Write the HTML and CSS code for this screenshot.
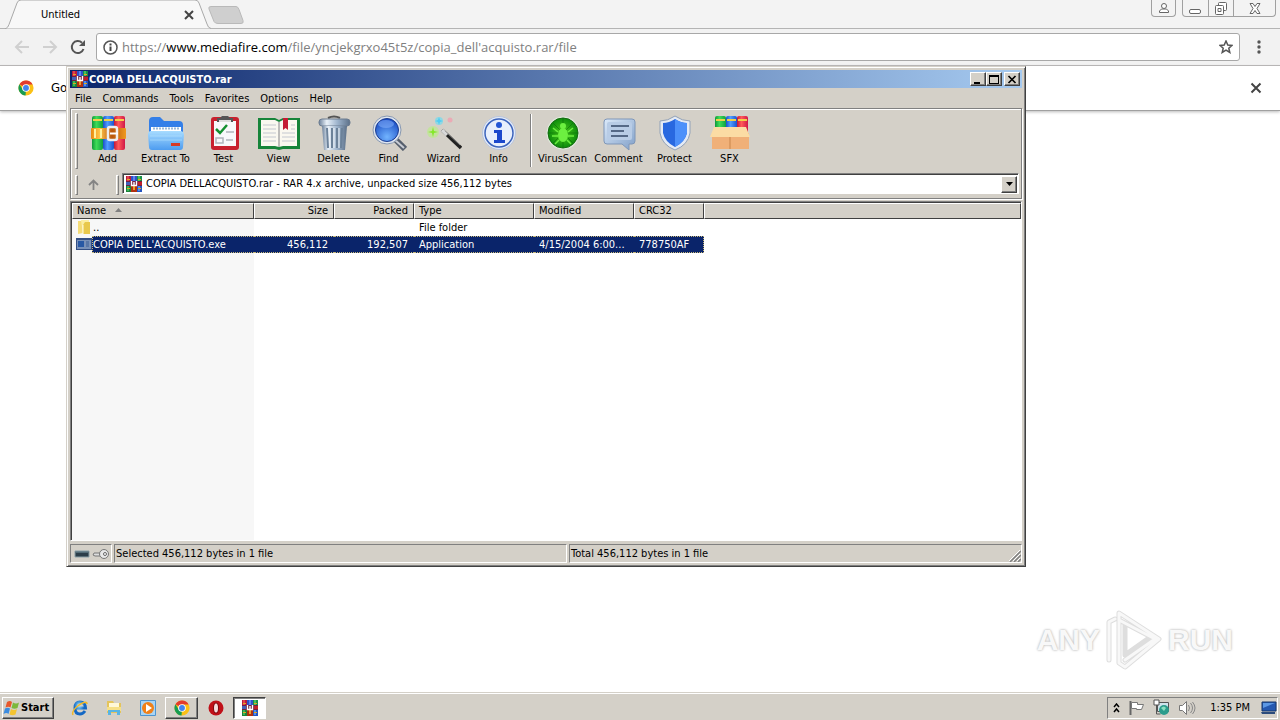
FILE: index.html
```
<!DOCTYPE html>
<html lang="en">
<head>
<meta charset="utf-8">
<title>COPIA DELLACQUISTO.rar</title>
<link rel="stylesheet" href="styles.css">
</head>
<body>
<svg class="defs" aria-hidden="true">
  <defs>
    <linearGradient id="gRed" x1="0" x2="1"><stop offset="0" stop-color="#c41838"/><stop offset=".4" stop-color="#ff5a5a"/><stop offset="1" stop-color="#d01848"/></linearGradient>
    <linearGradient id="gBlue" x1="0" x2="1"><stop offset="0" stop-color="#1c50c8"/><stop offset=".4" stop-color="#4f9dff"/><stop offset="1" stop-color="#1c54cc"/></linearGradient>
    <linearGradient id="gGreen" x1="0" x2="1"><stop offset="0" stop-color="#10983a"/><stop offset=".4" stop-color="#3fdc58"/><stop offset="1" stop-color="#10a040"/></linearGradient>
    <linearGradient id="gGold" x1="0" x2="1"><stop offset="0" stop-color="#e88a10"/><stop offset=".25" stop-color="#ffc64a"/><stop offset=".6" stop-color="#b8560c"/><stop offset="1" stop-color="#f09a20"/></linearGradient>
    <linearGradient id="gFolder" x1="0" x2="0" y1="0" y2="1"><stop offset="0" stop-color="#a8dcff"/><stop offset="1" stop-color="#4d9cf0"/></linearGradient>
    <linearGradient id="gSteel" x1="0" x2="1"><stop offset="0" stop-color="#6d829c"/><stop offset=".25" stop-color="#e8f0f8"/><stop offset=".6" stop-color="#9db3cc"/><stop offset="1" stop-color="#5c7088"/></linearGradient>
    <linearGradient id="gNote" x1="0" x2="1" y1="0" y2="1"><stop offset="0" stop-color="#dceafa"/><stop offset="1" stop-color="#7f9fc8"/></linearGradient>
    <radialGradient id="gLens" cx=".5" cy=".8" r=".8"><stop offset="0" stop-color="#72b4ff"/><stop offset="1" stop-color="#1446c0"/></radialGradient>
    <radialGradient id="gVirus"><stop offset="0" stop-color="#52d01c"/><stop offset="1" stop-color="#0c8c0c"/></radialGradient>
    <radialGradient id="gIe" cx=".4" cy=".3"><stop offset="0" stop-color="#8ee0ff"/><stop offset="1" stop-color="#1468c4"/></radialGradient>
  </defs>
  <symbol id="rar" viewBox="0 0 16 16">
    <path fill="#b81c38" d="M0 0h5v5H0z"/><path fill="#3050c8" d="M5 0h6v5H5z"/><path fill="#189048" d="M11 0h5v5h-5z"/>
    <path fill="#e04050" d="M1 0h2v5H1z"/><path fill="#5a84f0" d="M7 0h2v5H7z"/><path fill="#40c060" d="M12 0h2v5h-2z"/>
    <path fill="#1c8038" d="M0 10h5v6H0z"/><path fill="#b03010" d="M5 10h6v6H5z"/><path fill="#2454c0" d="M11 10h5v6h-5z"/>
    <path fill="#38b858" d="M1 10h2v5H1z"/><path fill="#4c8cf0" d="M12 10h2v5h-2z"/><path fill="#e8a030" d="M7 10h2v4H7z"/>
    <path fill="#702040" d="M0 5h16v5H0z"/><path fill="#4060b8" d="M0 6h4v3H0z"/><path fill="#c02028" d="M12 6h4v3h-4z"/>
    <path fill="none" stroke="#fff" stroke-width="1.400" d="M5.500 5v4.500h5V5M8 6v3"/>
    <path fill="#e0a820" d="M1 3h3v1H1zM12 3h3v1h-3zM1 12h3v1H1zM12 12h3v1h-3z"/>
  </symbol>
  <symbol id="chrome" viewBox="0 0 18 18">
    <circle cx="9" cy="9" r="8.500" fill="#fbc116"/>
    <path fill="#e33b2e" d="M9 9 1.600 4.800A8.500 8.500 0 0 1 16.500 5H9z"/>
    <path fill="#179c52" d="M9 9 8.500 17.500A8.500 8.500 0 0 1 1.600 4.800L5.500 11z"/>
    <circle cx="9" cy="9" r="4.300" fill="#fff"/><circle cx="9" cy="9" r="3.300" fill="#4384ee"/>
  </symbol>
</svg>

<div class="desktop">
  <section class="browser" aria-label="Browser">
    <header class="tabstrip">
      <div class="tab">
        <svg class="tab-shape" viewBox="0 0 206 29" preserveAspectRatio="none" aria-hidden="true"><path d="M0 28.500h1q2-1 3-4L12 3q1-3 4-3h174q3 0 4 3l8 21q1 4 4 4.500V29H0z" fill="#f8f8f8" stroke="#a9a9a9"/></svg>
        <span class="tab-title">Untitled</span>
        <button class="flat tab-close" aria-label="Close tab"><svg width="10" height="10" viewBox="0 0 10 10"><path d="m1 1 8 8M9 1 1 9" stroke="#444" stroke-width="2"/></svg></button>
      </div>
      <button class="flat new-tab" aria-label="New tab"><svg width="36" height="18" viewBox="0 0 36 18"><path d="M3 .5h25q2 0 3 3l4 11q1 3-2 3H10q-3 0-4-2L1 3Q0 .5 3 .5z" fill="#cfcfcf" stroke="#b9b9b9"/></svg></button>
      <div class="win-controls">
        <button class="wc user" aria-label="Profile"><svg width="12" height="12" viewBox="0 0 12 12" fill="#fff" stroke="#666"><path d="M1.500 10.500V9l2-2h5l2 2v1.500z"/><circle cx="6" cy="4" r="2.500"/></svg></button>
        <div class="wc-group">
          <button class="wc" aria-label="Minimize"><svg width="13" height="12" viewBox="0 0 13 12"><rect x=".5" y="7.500" width="11" height="4" rx="1.500" fill="#fff" stroke="#666"/></svg></button>
          <button class="wc" aria-label="Restore"><svg width="14" height="13" viewBox="0 0 14 13" fill="#fff" stroke="#666"><rect x="4.500" y=".5" width="8" height="8" rx="1"/><rect x="1.500" y="3.500" width="8" height="9" rx="1"/><path d="M4 6.500h3v3H4z"/></svg></button>
          <button class="wc wide" aria-label="Close"><svg width="12" height="11" viewBox="0 0 12 11"><path d="M1 .5h3l2 3 2-3h3L8 5.500l3 5H8l-2-3-2 3H1l3-5z" fill="#fff" stroke="#666"/></svg></button>
        </div>
      </div>
    </header>
    <nav class="navbar">
      <button class="flat nav" aria-label="Back"><svg width="16" height="14" viewBox="0 0 16 14"><path d="M15 7H2M8 1 2 7l6 6" fill="none" stroke="#d0d0d0" stroke-width="2"/></svg></button>
      <button class="flat nav" aria-label="Forward"><svg width="16" height="14" viewBox="0 0 16 14"><path d="M1 7h13M8 1l6 6-6 6" fill="none" stroke="#d0d0d0" stroke-width="2"/></svg></button>
      <button class="flat nav" aria-label="Reload"><svg width="16" height="16" viewBox="0 0 16 16"><path d="M13.500 10A6 6 0 1 1 12 3.700" fill="none" stroke="#555" stroke-width="2"/><path d="M15 1v6H9z" fill="#555"/></svg></button>
      <div class="omnibox">
        <svg width="15" height="15" viewBox="0 0 15 15" aria-hidden="true"><circle cx="7.500" cy="7.500" r="6.500" fill="none" stroke="#555" stroke-width="1.500"/><path d="M6.500 6.500h2V11h-2zM6.500 3.500h2v2h-2z" fill="#444"/></svg>
        <a class="url" href="#">https://<b>www.mediafire.com</b>/file/yncjekgrxo45t5z/copia_dell'acquisto.rar/file</a>
        <button class="flat star" aria-label="Bookmark"><svg width="14" height="14" viewBox="0 0 14 14"><path d="m7 1 1.800 4 4.200.4-3.200 2.800 1 4.300L7 10.200l-3.800 2.300 1-4.300L1 5.400 5.200 5z" fill="none" stroke="#555" stroke-width="1.500"/></svg></button>
      </div>
      <button class="flat dots" aria-label="Menu"><svg width="4" height="14" viewBox="0 0 4 14" fill="#555"><circle cx="2" cy="2" r="1.700"/><circle cx="2" cy="7" r="1.700"/><circle cx="2" cy="12" r="1.700"/></svg></button>
    </nav>
    <div class="infobar">
      <svg class="i16" aria-hidden="true"><use href="#chrome"/></svg>
      <span class="info-text">Go</span>
      <button class="flat info-close" aria-label="Dismiss"><svg width="12" height="12" viewBox="0 0 12 12"><path d="m1.500 1.500 9 9M10.500 1.500l-9 9" stroke="#444" stroke-width="2"/></svg></button>
    </div>
    <main class="page">
      <div class="watermark">
        <span>ANY</span>
        <svg width="58" height="64" viewBox="0 0 58 64" aria-hidden="true"><g fill="none" stroke-linejoin="round" stroke-linecap="round"><path id="mark" d="M4 52V14l6-3M14 50V5l40 26-34 28-6-4v-5M14 12l38 20M20 52l30-21M20 15v32l24-17" stroke="#dedede" stroke-width="5"/><path d="M4 52V14l6-3M14 50V5l40 26-34 28-6-4v-5M14 12l38 20M20 52l30-21" stroke="#f8f8f8" stroke-width="3"/></g></svg>
        <span>RUN</span>
      </div>
    </main>
  </section>

  <section class="window" aria-label="WinRAR">
    <header class="titlebar">
      <svg class="i16" aria-hidden="true"><use href="#rar"/></svg>
      <h1>COPIA DELLACQUISTO.rar</h1>
      <button class="cap" aria-label="Minimize"><svg width="10" height="9" viewBox="0 0 10 9"><path d="M1 7h6v2H1z"/></svg></button>
      <button class="cap" aria-label="Maximize"><svg width="10" height="9" viewBox="0 0 10 9"><path d="M0 0h10v9H0zm1 2v6h8V2z" fill-rule="evenodd"/></svg></button>
      <button class="cap close" aria-label="Close"><svg width="10" height="9" viewBox="0 0 10 9"><path d="m1.500 1 7 7M8.500 1l-7 7" stroke="#000" stroke-width="1.700"/></svg></button>
    </header>
    <nav class="menu">
      <button>File</button><button>Commands</button><button>Tools</button><button>Favorites</button><button>Options</button><button>Help</button>
    </nav>
    <div class="rebar">
      <div class="tools">
        <i class="grip"></i>
        <button class="tool"><svg viewBox="0 0 36 36"><rect x="2" y="1" width="11" height="34" rx="2" fill="url(#gGreen)"/><rect x="13" y="1" width="11" height="34" rx="2" fill="url(#gBlue)"/><rect x="24" y="1" width="11" height="34" rx="2" fill="url(#gRed)"/><path d="M3 5h9M14 5h9M25 5h9" stroke="#f2d04c" stroke-width="2"/><rect x="1" y="13" width="35" height="11" rx="1" fill="url(#gGold)"/><path d="M5 14v9M11 14v9" stroke="#fff0a0" stroke-width="2"/><rect x="18" y="12" width="9" height="13" rx="2" fill="none" stroke="#eee" stroke-width="2.500"/><path d="M20 18.500h8" stroke="#fff" stroke-width="2"/></svg>Add</button>
        <button class="tool extract"><svg viewBox="0 0 36 36"><path d="M1 6q0-4 4-4h7l4 4h15q4 0 4 4v15H1z" fill="#347fe8"/><path d="M3 12h30v12H3z" fill="#fff"/><path d="M5 13.500h27" stroke="#9ab8d8" stroke-width="2" stroke-dasharray="2 1"/><path d="M0 20q0-4 3-4h29q4 0 4 4l-1 12q0 3-3 3H4q-3 0-3-3z" fill="url(#gFolder)"/><path d="M2 21h32M2 25h32" stroke="#b8e4ff" opacity=".6"/><rect x="23" y="28" width="9" height="3" fill="#d83a26"/></svg>Extract To</button>
        <button class="tool"><svg viewBox="0 0 36 36"><rect x="5" y="2" width="28" height="33" rx="3" fill="#c8202e"/><rect x="8" y="6" width="22" height="25" fill="#f8f8fa"/><path d="M11 7V3h3l2-2h6l2 2h3v4z" fill="#555"/><path d="M13 6h12" stroke="#ddd" stroke-width="2"/><path d="m10 14 4 4 7-8" fill="none" stroke="#149030" stroke-width="2.500"/><path d="M20 17h8M20 25h7M10 23h7v5h-7z" fill="none" stroke="#b0b4bc" stroke-width="1.500"/></svg>Test</button>
        <button class="tool"><svg class="book" viewBox="0 0 44 36"><path d="M1 3h17l4 2 4-2h17v31H26l-4 1-4-1H1z" fill="#16843a"/><path d="M4 5h14l4 2v25l-4-1H4zM40 5H26l-4 2v25l4-1h14z" fill="#faf8f0"/><path d="M22 7v25" stroke="#aaa" stroke-width="1.500"/><path d="M6 10h13M6 14h13M6 18h13M6 22h13M6 26h13M25 18h13M25 22h13M25 26h13M34 10h4M34 14h4" stroke="#c4c8d0"/><path d="M26 3h5v12l-2.500-2-2.500 2z" fill="#c41c34"/></svg>View</button>
        <button class="tool"><svg viewBox="0 0 36 36"><path d="M12 3q6-3 12 0" fill="none" stroke="#555" stroke-width="2"/><rect x="3" y="4" width="31" height="7" rx="3" fill="url(#gSteel)" stroke="#6c7c90"/><path d="M6 11h25l-2 24H8z" fill="url(#gSteel)"/><path d="m11 13 1 20M16 13v20M21 13v20M26 13l-1 20" stroke="#6c829a" stroke-width="2"/><path d="m13 13 1 20M18 13v20M23 13v20" stroke="#eef4fa"/></svg>Delete</button>
        <button class="tool"><svg viewBox="0 0 36 36"><path d="m25 25 9 9" stroke="#555e6c" stroke-width="6"/><path d="m24 25 9 8" stroke="#c8ccd4" stroke-width="2"/><circle cx="16" cy="15" r="14" fill="#dfe6f0" stroke="#8898b0"/><circle cx="16" cy="15" r="11.500" fill="url(#gLens)" stroke="#1c3c90"/><ellipse cx="15" cy="9" rx="8" ry="4" fill="#8cb8ff" opacity=".5"/></svg>Find</button>
        <button class="tool"><svg viewBox="0 0 36 36"><path d="m16 15 19 18" stroke="#222" stroke-width="3.500"/><path d="m16 15 5 5" stroke="#d8d8d8" stroke-width="3.500"/><path d="m19 16 15 14" stroke="#999" stroke-width=".8"/><circle cx="7" cy="17" r="6" fill="#b8f080" opacity=".6"/><path d="m7 12 1 4 4 1-4 1-1 4-1-4-4-1 4-1z" fill="#84e828"/><circle cx="13" cy="6" r="4" fill="#70dcf0" opacity=".7"/><path d="m13 2 1 3 3 1-3 1-1 3-1-3-3-1 3-1z" fill="#50ccf4"/><circle cx="24" cy="5" r="2.500" fill="#f0a0b0" opacity=".8"/></svg>Wizard</button>
        <button class="tool"><svg viewBox="0 0 36 36"><circle cx="18" cy="18" r="16.500" fill="#e4ebf8" stroke="#b8c4dc"/><circle cx="18" cy="18" r="14" fill="#e8effc" stroke="#3c64bc" stroke-width="1.500"/><circle cx="18" cy="10" r="3" fill="#2456d4"/><path d="M13 15h8v10h3v3H13v-3h3v-7h-3z" fill="#1c48cc"/></svg>Info</button>
        <i class="sep"></i>
        <button class="tool"><svg viewBox="0 0 36 36"><circle cx="18" cy="18" r="16.500" fill="#e0e8dc"/><circle cx="18" cy="18" r="15" fill="url(#gVirus)" stroke="#176b12"/><path d="M18 3v30M3 18h30M8 8l20 20M28 8 8 28" stroke="#0b6f0b" opacity=".6"/><ellipse cx="18" cy="20" rx="5" ry="7" fill="#6cf040"/><circle cx="18" cy="11" r="3" fill="#6cf040"/><path d="m13 17-5-4M23 17l5-4M13 21H7M23 21h6M14 25l-4 4M22 25l4 4" stroke="#6cf040" stroke-width="1.500"/></svg>VirusScan</button>
        <button class="tool comment"><svg viewBox="0 0 36 36"><path d="M6 4h25q3 0 3 3v19q0 3-3 3h-3v6l-7-6H6q-3 0-3-3V7q0-3 3-3z" fill="url(#gNote)" stroke="#7e96b8"/><rect x="6" y="7" width="25" height="18" rx="2" fill="#b8cce6"/><path d="M10 11h18M10 16h13M10 21h17" stroke="#344868" stroke-width="1.500"/></svg>Comment</button>
        <button class="tool"><svg viewBox="0 0 36 36"><path d="M18 1q7 5 15 5v12q-2 12-15 17Q5 30 3 18V6q8 0 15-5z" fill="#e4eaf4" stroke="#92a2b8"/><path d="M18 4q6 4 12 4v10q-2 9-12 14Q8 27 6 18V8q6 0 12-4z" fill="#2868e0"/><path d="M18 4q6 4 12 4v10q-2 9-12 14z" fill="#4c90fa"/></svg>Protect</button>
        <button class="tool"><svg class="sfx" viewBox="0 0 40 36"><rect x="5" y="1" width="11" height="18" rx="2" fill="url(#gGreen)"/><rect x="16" y="1" width="11" height="18" rx="2" fill="url(#gBlue)"/><rect x="27" y="1" width="11" height="18" rx="2" fill="url(#gRed)"/><path d="M6 5h9M17 5h9M28 5h9" stroke="#f0d048" stroke-width="2"/><path d="M2 18h37v16H2z" fill="#f0b078"/><path d="M20 18v16" stroke="#c8854a"/><path d="M4 12h16v10H0zM20 12h16l4 10H20z" fill="#fbdca4"/></svg>SFX</button>
      </div>
      <div class="address">
        <i class="grip"></i>
        <button class="flat up" aria-label="Up one level"><svg width="11" height="11" viewBox="0 0 11 11"><path d="M5.500 11V2M1 6l4.500-4.500L10 6" fill="none" stroke="#848484" stroke-width="1.800"/></svg></button>
        <i class="grip"></i>
        <div class="combo">
          <svg class="i16" aria-hidden="true"><use href="#rar"/></svg>
          <select aria-label="Path"><option>COPIA DELLACQUISTO.rar - RAR 4.x archive, unpacked size 456,112 bytes</option></select>
          <span class="drop" aria-hidden="true"><svg width="7" height="4" viewBox="0 0 7 4"><path d="M0 0h7L3.500 4z"/></svg></span>
        </div>
      </div>
    </div>
    <div class="list">
      <table>
        <colgroup><col class="c-name"><col class="c-num"><col class="c-num"><col class="c-type"><col class="c-mod"><col class="c-crc"><col></colgroup>
        <thead><tr><th>Name<svg class="sort" width="7" height="4" viewBox="0 0 7 4"><path d="M3.500 0 7 4H0z" fill="#808080"/></svg></th><th class="num">Size</th><th class="num">Packed</th><th>Type</th><th>Modified</th><th>CRC32</th><th></th></tr></thead>
        <tbody>
          <tr><td class="name"><div><svg class="i16" viewBox="0 0 16 16"><path d="M2 2h5v12l-5 1z" fill="#f4dc78"/><path d="M5 1h8v12l-6 2z" fill="#fbeea4"/><path d="M9 3h5v12H7V6z" fill="#e8c84c"/><path d="M7 6v9" stroke="#fffbe0"/></svg><span>..</span></div></td><td></td><td></td><td>File folder</td><td></td><td></td><td></td></tr>
          <tr class="selected"><td class="name"><div><svg class="i16" viewBox="0 0 16 16"><path d="M0 2h16v12H0z" fill="#344f84"/><path d="M1 4h14v9H1z" fill="#7890b8"/><path d="M2 5h6v6H2z" fill="#2858a4"/><path d="M10 6h3M10 8h3M10 10h3" stroke="#3a5c94"/></svg><span>COPIA DELL'ACQUISTO.exe</span></div></td><td class="num">456,112</td><td class="num">192,507</td><td>Application</td><td>4/15/2004 6:00...</td><td>778750AF</td><td></td></tr>
        </tbody>
      </table>
    </div>
    <footer class="status">
      <div class="cell icons"><svg width="16" height="12" viewBox="0 0 16 12"><path d="M1 3h14v6H1z" fill="#2c3e4a" stroke="#8ba0a8"/><path d="M2 4h12" stroke="#7a98a4"/></svg><svg width="18" height="12" viewBox="0 0 18 12"><path d="M9 5H2l-1 2 2 1h6" fill="#ddd" stroke="#777"/><circle cx="12" cy="6" r="4.500" fill="#e8e8e8" stroke="#777"/><circle cx="13" cy="6" r="1.500" fill="#fff" stroke="#666"/></svg></div>
      <div class="cell">Selected 456,112 bytes in 1 file</div>
      <div class="cell">Total 456,112 bytes in 1 file<svg class="size-grip" width="12" height="12" viewBox="0 0 12 12"><path d="M1 12 12 1M5 12l7-7M9 12l3-3" stroke="#808080" stroke-width="1.500"/><path d="M0 11 11 0M4 11l7-7M8 11l3-3" stroke="#fff"/></svg></div>
    </footer>
  </section>
</div>

<footer class="taskbar">
  <button class="start"><svg width="18" height="16" viewBox="0 0 18 16"><path d="M4 2q3-2 5 0L7.500 7.500q-2-1.500-5 0z" fill="#e8582c"/><path d="M10 2.500q3 2 6 0L14.500 8q-3 1.500-6 0z" fill="#7cb83c"/><path d="M2 8.500q3-1.500 5 0L5.500 14q-2-2-5 0z" fill="#3c8ce0"/><path d="M8 9q3 2 6 0l-1.500 5.500q-3 1.500-6 0z" fill="#f4c430"/></svg>Start</button>
  <div class="quick">
    <button class="flat task" aria-label="Internet Explorer"><svg width="18" height="18" viewBox="0 0 18 18"><path d="M14 12q-2 3-5 3-5 0-5-6t5-6q5 0 5.500 6H5" fill="none" stroke="url(#gIe)" stroke-width="3"/><path d="M2 16Q0 12 8 6q8-5 8-1" fill="none" stroke="#f0b828" stroke-width="1.500"/></svg></button>
    <button class="flat task" aria-label="Explorer"><svg width="18" height="18" viewBox="0 0 18 18"><path d="M2 2h6l1 2h7v10H2z" fill="#e4c45c"/><path d="M4 4h10v6H4z" fill="#fff8d8"/><path d="M2 8h14v4H2z" fill="#f6e088"/><path d="M3 16v-5h12v5h-3v-3H6v3z" fill="#58b4e4"/></svg></button>
    <button class="flat task" aria-label="Media Player"><svg width="18" height="18" viewBox="0 0 18 18"><path d="M1.500 1.500h15v15h-15z" fill="#a8d4f4" stroke="#4c94d0"/><circle cx="9" cy="9" r="6" fill="#f08018"/><path d="M7 5v8l6-4z" fill="#fff"/></svg></button>
    <button class="task raised" aria-label="Chrome"><svg class="i16"><use href="#chrome"/></svg></button>
    <button class="flat task" aria-label="Opera"><svg width="16" height="16" viewBox="0 0 16 16"><circle cx="8" cy="8" r="7.500" fill="#c01018"/><ellipse cx="8" cy="8" rx="3" ry="5.500" fill="#7a0810"/><ellipse cx="8" cy="8" rx="2" ry="4.500" fill="#f4dcdc"/></svg></button>
    <button class="task pressed" aria-label="WinRAR"><svg class="i16"><use href="#rar"/></svg></button>
  </div>
  <div class="tray">
    <svg width="7" height="10" viewBox="0 0 7 10"><path d="m1 4 2.500-3L6 4M1 9l2.500-3L6 9" fill="none" stroke="#000" stroke-width="1.500"/></svg>
    <svg width="17" height="16" viewBox="0 0 17 16"><path d="M2.500 1v14" stroke="#666" stroke-width="2"/><path d="M3.500 2.500h6v2h6l-2 5h-5v-1h-5z" fill="#fff" stroke="#777"/></svg>
    <svg width="17" height="17" viewBox="0 0 17 17"><path d="M4.500 3.500h11v9h-11z" fill="#cfe4ec" stroke="#555"/><path d="M1 1h5v5H1z" fill="#fff" stroke="#555"/><path d="M3.500 6v9h4" fill="none" stroke="#555"/><circle cx="11" cy="11" r="5" fill="#2c9c8c"/><path d="M8 9q3-3 5 0l-2 3z" fill="#8ce0c0"/></svg>
    <svg width="18" height="16" viewBox="0 0 18 16"><path d="M1.500 5.500h3l4-4v13l-4-4h-3z" fill="#fff" stroke="#777"/><path d="M10.500 5q2 3 0 6M12.500 3q4 5 0 10M14.500 2q5 6 0 12" fill="none" stroke="#888"/></svg>
    <time class="clock">1:35 PM</time>
    <svg width="16" height="14" viewBox="0 0 16 14"><path d="M1 1h14v9H1z" fill="#2458b0" stroke="#16386c"/><path d="M2 2h12L2 7z" fill="#5c98e4"/><path d="M0 11h14v2H1z" fill="#2c4c7c"/></svg>
  </div>
</footer>
</body>
</html>
```
FILE: styles.css
```
:root {
  --ui: "DejaVu Sans Condensed", "DejaVu Sans", sans-serif;
  --face: #d4d0c8;
  --shadow: #808080;
  --navy: #0a246a;
}
* { box-sizing: border-box; }
body {
  margin: 0;
  height: 100vh;
  display: flex;
  flex-direction: column;
  overflow: hidden;
  background: #fff;
  color: #000;
  font: 11px/14px var(--ui);
}
button, select { font: inherit; color: inherit; margin: 0; padding: 0; border-radius: 0; }
svg { flex: none; display: block; }
.defs { position: absolute; width: 0; height: 0; }
.i16 { width: 16px; height: 16px; }
.flat { background: none; border: 0; display: flex; align-items: center; justify-content: center; }
.desktop { flex: 1; position: relative; min-height: 0; }

/* Browser */
.browser { height: 100%; display: flex; flex-direction: column; }
.tabstrip { height: 29px; display: flex; align-items: flex-start; background: #f3f3f3; border-bottom: 1px solid #b4b4b4; padding-left: 5px; }
.tab { width: 206px; height: 29px; position: relative; display: flex; align-items: center; padding: 0 17px 0 36px; }
.tab-shape { position: absolute; inset: 0; width: 100%; height: 100%; }
.tab-title { position: relative; flex: 1; }
.tab-close { position: relative; }
.new-tab { margin: 6px 0 0 -3px; }
.win-controls { margin-left: auto; display: flex; gap: 6px; padding-right: 4px; }
.wc { width: 25px; height: 16px; border: 0; background: none; display: flex; align-items: center; justify-content: center; }
.wc.user { border: 1px solid #a0a0a0; border-top: 0; border-radius: 0 0 4px 4px; height: 17px; }
.wc-group { display: flex; border: 1px solid #a0a0a0; border-top: 0; border-radius: 0 0 4px 4px; }
.wc-group .wc + .wc { border-left: 1px solid #a0a0a0; }
.wc.wide { width: 42px; }
.navbar { height: 37px; display: flex; align-items: center; background: #f2f2f2; border-bottom: 1px solid #b6b4b4; padding-left: 8px; }
.nav { width: 28px; height: 28px; }
.omnibox { flex: 1; height: 28px; display: flex; align-items: center; gap: 4px; margin-left: 4px; padding: 0 6px; background: #fff; border: 1px solid #a8a8a8; border-radius: 3px; }
.url { flex: 1; color: #808080; text-decoration: none; font: 13px/20px "Open Sans", "Noto Sans", sans-serif; white-space: nowrap; }
.url b { color: #000; font-weight: 400; }
.dots { width: 38px; height: 28px; margin-right: 2px; }
.infobar { height: 45px; display: flex; align-items: center; gap: 17px; padding: 0 18px; background: #fff; border-bottom: 1px solid #a0a0a0; box-shadow: 0 1px 3px #bbb; }
.info-text { font-size: 13px; flex: 1; }
.page { flex: 1; display: flex; align-items: flex-end; justify-content: flex-end; padding: 0 47px 20px; }
.watermark { display: flex; align-items: center; gap: 5px; color: #f8f8f8; font: bold 30px/64px "Liberation Sans", Arial, sans-serif; text-shadow: 0 0 2px #bbb, 0 0 3px #ccc; }

/* Archive window */
.window {
  position: absolute; left: 66px; top: 66px; bottom: 125px; width: 75%;
  display: flex; flex-direction: column; padding: 3px;
  background: var(--face); border: 1px solid; border-color: var(--face) #404040 #404040 var(--face);
  box-shadow: inset 1px 1px #fff, inset -1px -1px var(--shadow);
}
.titlebar { height: 18px; display: flex; align-items: center; padding: 0 2px; background: linear-gradient(90deg, var(--navy), #a6caf0); color: #fff; }
h1 { flex: 1; margin: 0 0 0 1px; font-size: 11px; font-weight: 700; line-height: 18px; padding-top: 1px; }
.cap, .raised, .start, .drop { background: var(--face); border: 1px solid; border-color: #fff #404040 #404040 #fff; box-shadow: inset -1px -1px var(--shadow); }
.cap { width: 16px; height: 14px; display: flex; align-items: center; justify-content: center; }
.cap.close { margin-left: 2px; }
.menu { height: 20px; display: flex; align-items: center; gap: 11px; padding: 1px 5px 0; }
.menu button { border: 0; background: none; }
.rebar { border: 1px solid var(--shadow); box-shadow: inset 1px 1px #fff, 1px 1px #fff; padding: 2px 2px 1px 4px; }
.tools { display: flex; height: 60px; align-items: stretch; }
.grip { width: 3px; margin: 2px 2px 2px 0; border: 1px solid; border-color: #fff var(--shadow) var(--shadow) #fff; }
.tool { width: 55px; border: 0; background: none; display: flex; flex-direction: column; align-items: center; gap: 1px; padding-top: 4px; white-space: nowrap; }
.tool svg { width: 36px; height: 36px; }
.tool .book { width: 44px; }
.tool .sfx { width: 40px; }
.extract { width: 61px; }
.comment { width: 57px; }
.sep { width: 2px; margin: 3px 3px 4px 4px; border-left: 1px solid var(--shadow); border-right: 1px solid #fff; }
.address { display: flex; height: 24px; margin-top: 2px; }
.up { width: 36px; }
.up svg { margin: 0 10px 2px 0; }
.combo { flex: 1; margin: 0 0 3px 1px; height: 21px; display: flex; align-items: center; background: #fff; padding: 0 1px; border: 1px solid; border-color: var(--shadow) #fff #fff var(--shadow); box-shadow: inset 1px 1px #404040; }
.combo .i16 { margin-left: 2px; }
.combo select { flex: 1; min-width: 0; height: 19px; margin-left: 4px; appearance: none; border: 0; background: none; }
.drop { width: 16px; height: 17px; margin-top: 1px; display: flex; align-items: center; justify-content: center; }
.list { flex: 1; min-height: 0; margin-top: 2px; border: 1px solid; border-color: var(--shadow) #fff #fff var(--shadow); box-shadow: inset 1px 1px #404040; padding: 1px 0 0 1px; background: #fff linear-gradient(#f7f7f7, #f7f7f7) 1px 0 / 182px 100% no-repeat; overflow: hidden; }
table { width: 100%; table-layout: fixed; border-collapse: separate; border-spacing: 0; }
.c-name { width: 182px; }
.c-num { width: 80px; }
.c-type { width: 120px; }
.c-mod { width: 100px; }
.c-crc { width: 70px; }
th { height: 16px; padding: 0 5px 0 4px; text-align: left; font-weight: 400; line-height: 14px; background: var(--face); border: 1px solid; border-color: #fff #404040 #404040 #fff; }
th.num, td.num { text-align: right; }
.sort { display: inline-block; margin-left: 9px; vertical-align: 2px; }
td { height: 17px; padding: 0 6px 0 5px; line-height: 17px; white-space: nowrap; }
td.name { padding: 0 0 0 4px; }
td.name div { display: flex; }
td.name span { flex: 1; padding-left: 1px; line-height: 17px; }
.selected td:not(.name):not(:last-child), .selected .name span { background: var(--navy); color: #fff; border: dotted #c8b878; border-width: 1px 0; line-height: 15px; }
.selected .name span { border-left-width: 1px; padding-left: 0; }
.selected td:nth-last-child(2) { border-right-width: 1px !important; }
.status { display: flex; gap: 2px; height: 19px; margin-top: 3px; }
.cell { flex: 1; position: relative; padding-left: 1px; line-height: 18px; border: 1px solid; border-color: var(--shadow) #fff #fff var(--shadow); }
.cell.icons { flex: 0 0 42px; display: flex; align-items: center; gap: 2px; padding-left: 3px; }
.size-grip { position: absolute; right: 0; bottom: 0; }

/* Taskbar */
.taskbar { flex: none; height: 28px; display: flex; align-items: center; padding: 2px 2px 0; background: var(--face); border-top: 1px solid var(--face); box-shadow: inset 0 1px #fff; }
.start { width: 52px; height: 22px; display: flex; align-items: center; font-weight: 700; }
.quick { display: flex; align-items: center; gap: 1px; margin-left: 9px; }
.task { width: 33px; height: 22px; display: flex; align-items: center; justify-content: center; }
.pressed { background: #fff; border: 1px solid; border-color: #404040 #fff #fff #404040; box-shadow: inset 1px 1px var(--shadow); }
.tray { margin-left: auto; height: 22px; display: flex; align-items: center; gap: 8px; padding: 0 0 0 5px; border: 1px solid; border-color: var(--shadow) #fff #fff var(--shadow); }
.clock { margin: 0 3px 0 6px; }
```
